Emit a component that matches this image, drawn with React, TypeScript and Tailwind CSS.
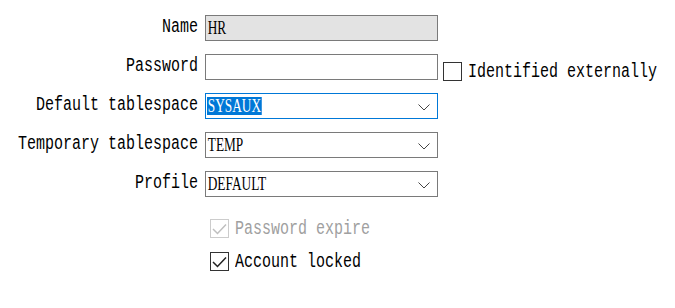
import React from 'react';

const monoTxt = "inline-block shrink-0 whitespace-nowrap scale-x-[0.75] font-['Liberation_Mono',monospace] text-[20px] leading-[20px]";

const Chevron = () => (
  <svg width="12" height="7" viewBox="0 0 12 7" className="absolute right-[7px] top-[10px]">
    <path d="M0.5 0.5 L6 6 L11.5 0.5" fill="none" stroke="#444" strokeWidth="1" />
  </svg>
);

const Check = ({ color }: { color: string }) => (
  <svg width="15" height="12" viewBox="0 0 15 12">
    <path d="M1 6 L5.5 10.5 L14 1.5" fill="none" stroke={color} strokeWidth="1.5" />
  </svg>
);

const Value: React.FC<{ text: string; selected?: boolean }> = ({ text, selected }) => (
  <span
    className={`inline-block origin-left scale-x-[0.74] font-['Liberation_Serif',serif] text-[18px] leading-[18px] px-[1px] ${
      selected ? 'bg-[#0078d7] text-white' : 'text-black'
    }`}
  >
    {text}
  </span>
);

const Field: React.FC<{ children?: React.ReactNode; kind?: 'plain' | 'disabled' | 'combo' | 'focus' }> = ({
  children,
  kind = 'plain',
}) => {
  const border = kind === 'focus' ? 'border-[#0078d7]' : 'border-[#7a7a7a]';
  const bg = kind === 'disabled' ? 'bg-[#e3e3e3]' : 'bg-white';
  return (
    <div className={`relative shrink-0 h-[26px] w-[233px] border ${border} ${bg} flex items-center pl-[1px]`}>
      {children}
      {(kind === 'combo' || kind === 'focus') && <Chevron />}
    </div>
  );
};

const Row: React.FC<{ label: string; children: React.ReactNode }> = ({ label, children }) => (
  <div className="flex items-start h-[26px]">
    <div className="w-[198px] shrink-0 flex justify-end text-black pt-[2px]">
      <span className={`${monoTxt} origin-right`}>{label}</span>
    </div>
    <div className="ml-[7px] shrink-0 flex items-start">{children}</div>
  </div>
);

const CheckBox: React.FC<{ checked?: boolean; disabled?: boolean; label: string }> = ({ checked, disabled, label }) => (
  <div className="flex items-center h-[19px]">
    <div
      className={`w-[19px] h-[19px] shrink-0 border flex items-center justify-center bg-white ${
        disabled ? 'border-[#cccccc]' : 'border-[#333333]'
      }`}
    >
      {checked && <Check color={disabled ? '#bfbfbf' : '#222'} />}
    </div>
    <span className={`${monoTxt} origin-left ml-[6px] ${disabled ? 'text-[#a0a0a0]' : 'text-black'}`}>{label}</span>
  </div>
);

export default function App() {
  return (
    <div className="w-[675px] h-[308px] bg-white pt-[15px] overflow-hidden">
      <div className="flex flex-col gap-[13px]">
        <Row label="Name">
          <Field kind="disabled">
            <Value text="HR" />
          </Field>
        </Row>
        <Row label="Password">
          <Field />
          <div className="ml-[5px] mt-[8px]">
            <CheckBox label="Identified externally" />
          </div>
        </Row>
        <Row label="Default tablespace">
          <Field kind="focus">
            <Value text="SYSAUX" selected />
          </Field>
        </Row>
        <Row label="Temporary tablespace">
          <Field kind="combo">
            <Value text="TEMP" />
          </Field>
        </Row>
        <Row label="Profile">
          <Field kind="combo">
            <Value text="DEFAULT" />
          </Field>
        </Row>
      </div>
      <div className="ml-[210px] mt-[22px] flex flex-col gap-[14px]">
        <CheckBox checked disabled label="Password expire" />
        <CheckBox checked label="Account locked" />
      </div>
    </div>
  );
}
